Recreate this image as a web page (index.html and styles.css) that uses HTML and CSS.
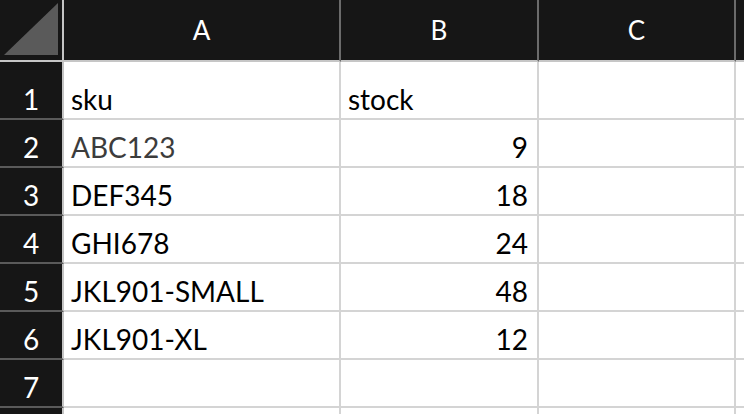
FILE: index.html
```html
<!DOCTYPE html>
<html lang="en">
<head>
    <meta charset="UTF-8">
    <meta name="viewport" content="width=device-width, initial-scale=1.0">
    <title>Sheet</title>
    <link rel="stylesheet" href="styles.css">
</head>
<body>

<div class="sheet">
    <!-- column headers -->
    <div class="corner">
        <svg class="corner-mark" width="54" height="52" viewBox="0 0 54 52">
            <polygon points="0,52 54,52 54,0" fill="#5a5a5a"/>
        </svg>
    </div>
    <div class="col-head">A</div>
    <div class="col-head">B</div>
    <div class="col-head">C</div>
    <div class="col-head"></div>

    <!-- row 1 -->
    <div class="row-head">1</div>
    <div class="cell">sku</div>
    <div class="cell">stock</div>
    <div class="cell"></div>
    <div class="cell"></div>

    <div class="row-head">2</div>
    <div class="cell muted">ABC123</div>
    <div class="cell num">9</div>
    <div class="cell"></div>
    <div class="cell"></div>

    <div class="row-head">3</div>
    <div class="cell">DEF345</div>
    <div class="cell num">18</div>
    <div class="cell"></div>
    <div class="cell"></div>

    <div class="row-head">4</div>
    <div class="cell">GHI678</div>
    <div class="cell num">24</div>
    <div class="cell"></div>
    <div class="cell"></div>

    <div class="row-head">5</div>
    <div class="cell">JKL901-SMALL</div>
    <div class="cell num">48</div>
    <div class="cell"></div>
    <div class="cell"></div>

    <div class="row-head">6</div>
    <div class="cell">JKL901-XL</div>
    <div class="cell num">12</div>
    <div class="cell"></div>
    <div class="cell"></div>

    <div class="row-head">7</div>
    <div class="cell"></div>
    <div class="cell"></div>
    <div class="cell"></div>
    <div class="cell"></div>

    <!-- row 8, only its top edge shows -->
    <div class="row-head"></div>
    <div class="cell"></div>
    <div class="cell"></div>
    <div class="cell"></div>
    <div class="cell"></div>
</div>

</body>
</html>
```

FILE: styles.css
```css
html, body {
    margin: 0;
    padding: 0;
    background-color: #fff;
    overflow: hidden;
}

body {
    font-family: Lato, "Open Sans", sans-serif;
    font-size: 28px;
    color: #000;
}

.sheet {
    display: grid;
    grid-template-columns: 64px 277px 198px 197px 1fr;
    grid-template-rows: 62px 58px;
    grid-auto-rows: 48px;
    height: 414px;
    overflow: hidden;
}

.sheet > div {
    box-sizing: border-box;
    border-right: 2px solid #d4d4d4;
    border-bottom: 2px solid #d4d4d4;
}

/* header row */
.corner {
    background-color: #161616;
    border-right-color: #c4c4c4 !important;
    border-bottom-color: #c6c6c6 !important;
    padding: 3px 0 0 4px;
}

.corner-mark {
    display: block;
}

.col-head {
    background-color: #161616;
    color: #fff;
    font-size: 26px;
    display: flex;
    align-items: center;
    justify-content: center;
    border-right-color: #6b6b6b !important;
    border-bottom-color: #c6c6c6 !important;
}

/* row numbers */
.row-head {
    background-color: #161616;
    color: #fff;
    display: flex;
    align-items: flex-end;
    justify-content: center;
    padding-bottom: 5px;
    line-height: 1;
    border-right-color: #c4c4c4 !important;
    border-bottom-color: #5a5a5a !important;
}

.cell {
    display: flex;
    align-items: flex-end;
    padding: 0 9px 5px 7px;
    line-height: 1;
    white-space: nowrap;
}

.cell.num {
    justify-content: flex-end;
}

.cell.muted {
    color: #3c3c3c;
}
```
